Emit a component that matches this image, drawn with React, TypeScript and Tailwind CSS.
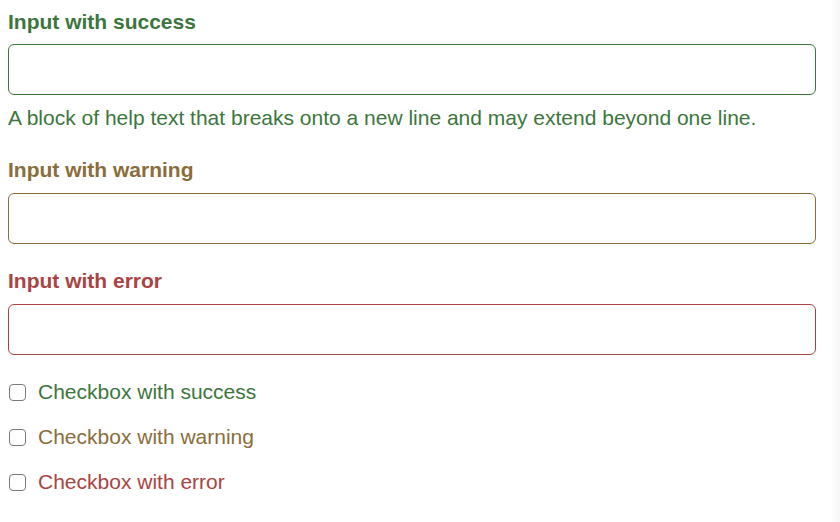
const states = [
  { label: "Input with success", text: "text-[#3c763d]", border: "border-[#3c763d]", help: true },
  { label: "Input with warning", text: "text-[#8a6d3b]", border: "border-[#8a6d3b]", help: false },
  { label: "Input with error", text: "text-[#a94442]", border: "border-[#a94442]", help: false },
];

const checks = [
  { label: "Checkbox with success", text: "text-[#3c763d]" },
  { label: "Checkbox with warning", text: "text-[#8a6d3b]" },
  { label: "Checkbox with error", text: "text-[#a94442]" },
];

export default function App() {
  return (
    <div className="flex min-h-[522px] bg-white font-['Liberation_Sans',Arial,sans-serif] text-[21px] leading-[30px]">
      <div className="w-[830px] pl-2 pr-[14px] pt-[6.5px]">
        {/* Inputs */}
        {states.map((s) => (
          <div key={s.label} className="mb-[22.5px]">
            <label className={`block font-bold mb-[7.5px] ${s.text}`}>{s.label}</label>
            <input
              type="text"
              className={`block w-full h-[51px] rounded-[6px] border bg-white px-[18px] outline-none ${s.border}`}
            />
            {s.help && (
              <p className={`mt-[7.5px] ${s.text}`}>
                A block of help text that breaks onto a new line and may extend beyond one line.
              </p>
            )}
          </div>
        ))}

        {/* Checkboxes */}
        <div className="flex flex-col gap-[15px]">
          {checks.map((c) => (
            <label key={c.label} className={`relative flex h-[30px] items-center pl-[30px] ${c.text}`}>
              <span className="absolute left-[0.5px] top-[6.5px] h-[17.5px] w-[17.5px] rounded-[4px] border-[1.5px] border-[#7a7a7a] bg-white" />
              {c.label}
            </label>
          ))}
        </div>
      </div>
      <div className="w-[10px] bg-gradient-to-r from-white to-[#f7f7f7]" />
    </div>
  );
}
